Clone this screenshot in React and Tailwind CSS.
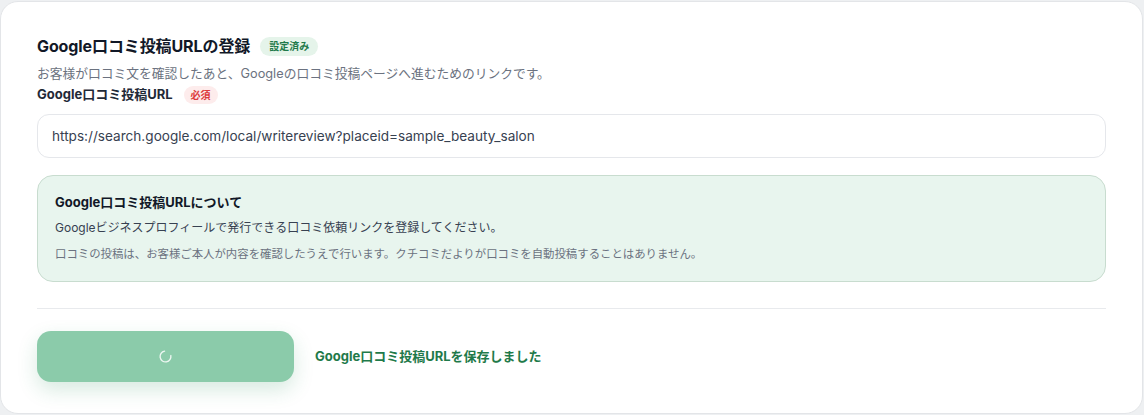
export default function App() {
  return (
    <div
      className="w-[1144px] h-[415px] bg-[#eef0f2] pt-[1px]"
      style={{ fontFamily: '"Inter", "Noto Sans CJK JP", sans-serif' }}
    >
      <div className="w-[1143px] h-[413px] rounded-[18px] border border-[#e3e5e8] bg-white px-[36px] pt-[32px] flex flex-col">
        <div className="flex items-center gap-[10px] h-[24px]">
          <h2 className="text-[16px] font-bold text-[#111827] tracking-[-0.1px]">Google口コミ投稿URLの登録</h2>
          <span className="rounded-full bg-[#e5f4ea] px-[9px] h-[19px] flex items-center text-[10px] font-bold text-[#1f7a4a]">
            設定済み
          </span>
        </div>
        <p className="mt-[6px] text-[12.75px] leading-[20px] text-[#6b7280]">
          お客様が口コミ文を確認したあと、Googleの口コミ投稿ページへ進むためのリンクです。
        </p>
        <div className="flex items-center gap-[11px] h-[20px] mt-px">
          <span className="text-[13px] font-bold text-[#1f2937]">Google口コミ投稿URL</span>
          <span className="rounded-full bg-[#fdecec] px-[7px] h-[18px] flex items-center text-[10px] font-bold text-[#dc3b3b]">
            必須
          </span>
        </div>
        <input
          className="mt-[9px] h-[44px] w-full rounded-[12px] border border-[#e5e7eb] px-[14px] text-[13.6px] text-[#374151] outline-none"
          defaultValue="https://search.google.com/local/writereview?placeid=sample_beauty_salon"
        />
        <div className="mt-[17px] h-[107px] rounded-[16px] border border-[#c8dccf] bg-[#e8f5ee] px-[17px] pt-[16px]">
          <p className="text-[13px] leading-[20px] font-bold text-[#111827]">Google口コミ投稿URLについて</p>
          <p className="mt-[6px] text-[12px] leading-[20px] text-[#374151]">
            Googleビジネスプロフィールで発行できる口コミ依頼リンクを登録してください。
          </p>
          <p className="mt-[7px] text-[11.4px] leading-[18px] text-[#6b7280]">
            口コミの投稿は、お客様ご本人が内容を確認したうえで行います。クチコミだよりが口コミを自動投稿することはありません。
          </p>
        </div>
        <div className="mt-[26px] border-t border-[#e8eaed]" />
        <div className="mt-[22px] flex items-center gap-[21px]">
          <button className="w-[257px] h-[51px] rounded-[14px] bg-[#8bcbaa] shadow-[0_8px_20px_rgba(34,139,84,0.18)] flex items-center justify-center">
            <svg width="13" height="13" viewBox="0 0 24 24" fill="none">
              <path
                d="M12 2a10 10 0 1 0 10 10"
                stroke="rgba(255,255,255,0.85)"
                strokeWidth="2.5"
                strokeLinecap="round"
                transform="rotate(-10 12 12)"
              />
            </svg>
          </button>
          <span className="text-[13px] font-bold text-[#1f7a4a]">Google口コミ投稿URLを保存しました</span>
        </div>
      </div>
    </div>
  );
}
